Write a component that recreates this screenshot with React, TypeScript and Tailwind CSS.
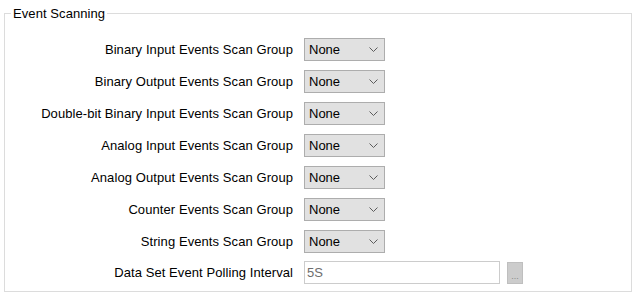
import React from "react";

const rows = [
  "Binary Input Events Scan Group",
  "Binary Output Events Scan Group",
  "Double-bit Binary Input Events Scan Group",
  "Analog Input Events Scan Group",
  "Analog Output Events Scan Group",
  "Counter Events Scan Group",
  "String Events Scan Group",
];

function Combo() {
  return (
    <div className="flex h-[23px] w-[81px] items-center justify-between border border-[#adadad] bg-[#e1e1e1] pl-[4px] pr-[6px] text-black">
      <span>None</span>
      <svg width="9" height="6" viewBox="0 0 9 6" className="mt-[1px]">
        <polyline points="0.5,0.5 4.5,4.5 8.5,0.5" fill="none" stroke="#5c5c5c" strokeWidth="1" />
      </svg>
    </div>
  );
}

export default function App() {
  return (
    <div
      className="h-[297px] w-[638px] bg-white pl-[4px] pt-[6px] text-[13px] leading-[15px] text-black"
      style={{ fontFamily: '"Liberation Sans", Arial, sans-serif' }}
    >
      <fieldset className="h-[286px] w-[628px] border border-[#dcdcdc] px-0 pb-0 pt-[17px]">
        <legend className="ml-[6px] px-[2px] tracking-[0.08px]">Event Scanning</legend>
        <div className="flex flex-col gap-[9px]">
          {rows.map((r) => (
            <div key={r} className="flex h-[23px] items-center">
              <div className="w-[288px] text-right tracking-[0.08px]">{r}</div>
              <div className="ml-[11px]">
                <Combo />
              </div>
            </div>
          ))}
          <div className="flex h-[23px] items-center -mt-[1px]">
            <div className="w-[288px] text-right tracking-[0.08px]">Data Set Event Polling Interval</div>
            <div className="ml-[11px] flex h-[23px] w-[196px] items-center border border-[#cccccc] bg-white pl-[2px] text-[#6d6d6d]">
              5S
            </div>
            <div className="ml-[7px] flex h-[22px] w-[16px] items-end justify-center border border-[#bfbfbf] bg-[#cccccc] pb-[4px] text-[9px] leading-[6px] text-[#8a8a8a]">
              ...
            </div>
          </div>
        </div>
      </fieldset>
    </div>
  );
}
